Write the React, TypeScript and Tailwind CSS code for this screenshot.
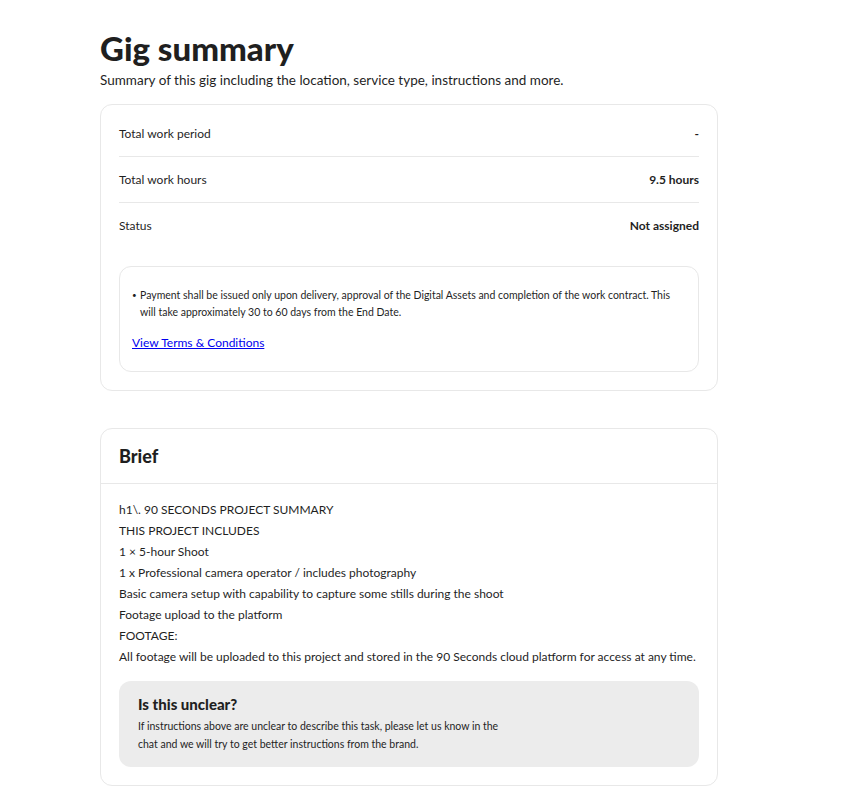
export default function App() {
  const rows = [
    { label: "Total work period", value: "-" },
    { label: "Total work hours", value: "9.5 hours" },
    { label: "Status", value: "Not assigned" },
  ];

  const briefLines = [
    "h1\\. 90 SECONDS PROJECT SUMMARY",
    "THIS PROJECT INCLUDES",
    "1 × 5-hour Shoot",
    "1 x Professional camera operator / includes photography",
    "Basic camera setup with capability to capture some stills during the shoot",
    "Footage upload to the platform",
    "FOOTAGE:",
    "All footage will be uploaded to this project and stored in the 90 Seconds cloud platform for access at any time.",
  ];

  return (
    <div className="min-h-screen bg-white font-['Lato',sans-serif] text-[#1f1f1f]">
      <div className="ml-[100px] w-[618px] pt-[28px] pb-[18px]">
        <h1 className="text-[33px] font-black leading-[40px]">Gig summary</h1>
        <p className="mt-[3px] text-[13.5px] leading-[18px]">
          Summary of this gig including the location, service type, instructions and more.
        </p>

        <section className="mt-[15px] rounded-[12px] border border-[#e8e8e8] px-[18px] pt-[6px] pb-[18px]">
          {rows.map((row, i) => (
            <div
              key={row.label}
              className={`flex h-[46px] items-center justify-between text-[12px] ${
                i < rows.length - 1 ? "border-b border-[#e8e8e8]" : ""
              }`}
            >
              <span>{row.label}</span>
              <span className="font-bold">{row.value}</span>
            </div>
          ))}

          <div className="mt-[17px] rounded-[12px] border border-[#e8e8e8] px-[12px] pt-[20px] pb-[18px]">
            <div className="flex text-[10.5px] leading-[17px]">
              <span className="w-[8px] shrink-0 text-[8px]">•</span>
              <p>
                Payment shall be issued only upon delivery, approval of the Digital Assets and completion of the work
                contract. This will take approximately 30 to 60 days from the End Date.
              </p>
            </div>
            <a href="#" className="mt-[14px] inline-block text-[12px] leading-[16px] text-[#0000ee] underline">
              View Terms &amp; Conditions
            </a>
          </div>
        </section>

        <section className="mt-[37px] rounded-[12px] border border-[#e8e8e8]">
          <div className="flex h-[55px] items-center border-b border-[#e8e8e8] px-[18px]">
            <h2 className="text-[18px] font-black">Brief</h2>
          </div>
          <div className="px-[18px] pt-[15px] pb-[18px]">
            <div className="text-[12px] leading-[21px]">
              {briefLines.map((line) => (
                <p key={line}>{line}</p>
              ))}
            </div>
            <div className="mt-[14px] rounded-[12px] bg-[#ececec] px-[19px] pt-[13px] pb-[14px]">
              <h3 className="text-[15px] font-black leading-[20px]">Is this unclear?</h3>
              <p className="mt-[3px] w-[372px] text-[10.5px] leading-[18px]">
                If instructions above are unclear to describe this task, please let us know in the chat and we will try
                to get better instructions from the brand.
              </p>
            </div>
          </div>
        </section>
      </div>
    </div>
  );
}
